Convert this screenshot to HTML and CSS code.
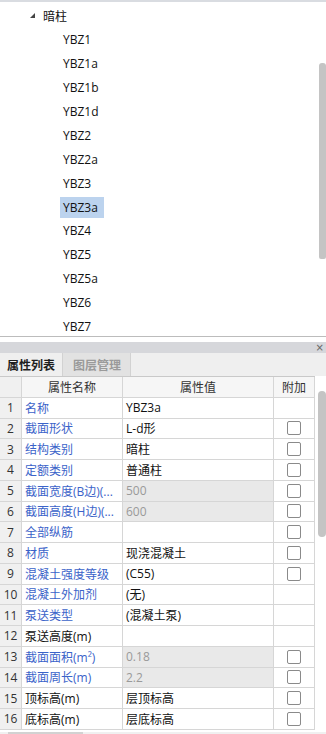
FILE: index.html
```html
<!DOCTYPE html>
<html lang="zh-CN">
<head>
    <meta charset="UTF-8">
    <meta name="viewport" content="width=device-width, initial-scale=1.0">
    <title>属性列表</title>
    <link rel="stylesheet" href="styles.css">
</head>
<body>
    <!-- component tree -->
    <section class="tree">
        <div class="tree-list">
            <div class="node root"><span class="twisty"></span>暗柱</div>
            <div class="node"><span>YBZ1</span></div>
            <div class="node"><span>YBZ1a</span></div>
            <div class="node"><span>YBZ1b</span></div>
            <div class="node"><span>YBZ1d</span></div>
            <div class="node"><span>YBZ2</span></div>
            <div class="node"><span>YBZ2a</span></div>
            <div class="node"><span>YBZ3</span></div>
            <div class="node"><span class="selected">YBZ3a</span></div>
            <div class="node"><span>YBZ4</span></div>
            <div class="node"><span>YBZ5</span></div>
            <div class="node"><span>YBZ5a</span></div>
            <div class="node"><span>YBZ6</span></div>
            <div class="node"><span>YBZ7</span></div>
        </div>
        <div class="vscroll tree-scroll"><div class="thumb"></div></div>
    </section>

    <!-- property panel -->
    <section class="panel">
        <div class="panel-title"><span class="close">×</span></div>
        <div class="tabs">
            <div class="tab active">属性列表</div>
            <div class="tab">图层管理</div>
        </div>
        <div class="grid-wrap">
            <div class="props">
                <div class="c num head"></div>
                <div class="c head">属性名称</div>
                <div class="c head">属性值</div>
                <div class="c head extra-head">附加</div>

                <div class="c num">1</div>
                <div class="c name blue">名称</div>
                <div class="c val">YBZ3a</div>
                <div class="c chk"></div>

                <div class="c num">2</div>
                <div class="c name blue">截面形状</div>
                <div class="c val">L-d形</div>
                <div class="c chk"><i class="box"></i></div>

                <div class="c num">3</div>
                <div class="c name blue">结构类别</div>
                <div class="c val">暗柱</div>
                <div class="c chk"><i class="box"></i></div>

                <div class="c num">4</div>
                <div class="c name blue">定额类别</div>
                <div class="c val">普通柱</div>
                <div class="c chk"><i class="box"></i></div>

                <div class="c num">5</div>
                <div class="c name blue">截面宽度(B边)(...</div>
                <div class="c val ro">500</div>
                <div class="c chk"><i class="box"></i></div>

                <div class="c num">6</div>
                <div class="c name blue">截面高度(H边)(...</div>
                <div class="c val ro">600</div>
                <div class="c chk"><i class="box"></i></div>

                <div class="c num">7</div>
                <div class="c name blue">全部纵筋</div>
                <div class="c val"></div>
                <div class="c chk"><i class="box"></i></div>

                <div class="c num">8</div>
                <div class="c name blue">材质</div>
                <div class="c val">现浇混凝土</div>
                <div class="c chk"><i class="box"></i></div>

                <div class="c num">9</div>
                <div class="c name blue">混凝土强度等级</div>
                <div class="c val">(C55)</div>
                <div class="c chk"><i class="box"></i></div>

                <div class="c num">10</div>
                <div class="c name blue">混凝土外加剂</div>
                <div class="c val">(无)</div>
                <div class="c chk"></div>

                <div class="c num">11</div>
                <div class="c name blue">泵送类型</div>
                <div class="c val">(混凝土泵)</div>
                <div class="c chk"></div>

                <div class="c num">12</div>
                <div class="c name">泵送高度(m)</div>
                <div class="c val"></div>
                <div class="c chk"></div>

                <div class="c num">13</div>
                <div class="c name blue">截面面积(m²)</div>
                <div class="c val ro">0.18</div>
                <div class="c chk"><i class="box"></i></div>

                <div class="c num">14</div>
                <div class="c name blue">截面周长(m)</div>
                <div class="c val ro">2.2</div>
                <div class="c chk"><i class="box"></i></div>

                <div class="c num">15</div>
                <div class="c name">顶标高(m)</div>
                <div class="c val">层顶标高</div>
                <div class="c chk"><i class="box"></i></div>

                <div class="c num">16</div>
                <div class="c name">底标高(m)</div>
                <div class="c val">层底标高</div>
                <div class="c chk"><i class="box"></i></div>
            </div>
            <div class="vscroll grid-scroll"><div class="thumb"></div></div>
        </div>
        <div class="hscroll"><div class="hthumb"></div></div>
    </section>
</body>
</html>
```

FILE: styles.css
```css
body {
    margin: 0;
    width: 326px;
    height: 734px;
    overflow: hidden;
    background-color: #fff;
    font-family: "Open Sans", "Noto Sans CJK SC", sans-serif;
    font-size: 12px;
    color: #111;
}

/* tree */

.tree {
    display: flex;
    height: 337px;
    box-sizing: border-box;
    border-top: 2px solid #d9dce1;
    border-bottom: 1px solid #bcbcbc;
    overflow: hidden;
}

.tree-list {
    flex: 1;
    padding-top: 2px;
}

.node {
    height: 23.9px;
    display: flex;
    align-items: center;
    padding-left: 60px;
    white-space: nowrap;
}

.node span {
    display: inline-block;
    padding: 0 3px;
    line-height: 21px;
}

.node .selected {
    background-color: #bcd3ee;
    padding-right: 6px;
}

.node.root {
    padding-left: 30px;
}

.twisty {
    width: 0;
    height: 0;
    padding: 0 !important;
    border-left: 5px solid transparent;
    border-bottom: 5px solid #444;
    margin-right: 8px;
}

.vscroll {
    width: 7px;
    flex: none;
}

.thumb {
    background-color: #c4c4c4;
    border-radius: 3px 3px 2px 2px;
}

.tree-scroll .thumb {
    margin-top: 61px;
    height: 196px;
}

/* panel */

.panel {
    margin-top: 5px;
}

.panel-title {
    height: 11px;
    background-color: #d6d7db;
    display: flex;
    justify-content: flex-end;
    align-items: center;
}

.close {
    font-family: "DejaVu Sans", sans-serif;
    font-size: 10px;
    line-height: 11px;
    color: #666;
    margin-right: 2px;
}

.tabs {
    height: 23px;
    background-color: #efefef;
    display: flex;
    align-items: stretch;
}

.tab {
    display: flex;
    align-items: center;
    font-weight: bold;
    padding: 0 7px;
    color: #9a9a9a;
    background-color: #e2e2e2;
    border-left: 1px solid #d2d2d2;
    border-right: 1px solid #d2d2d2;
    margin-left: 2px;
    padding: 0 9px 0 10px;
}

.tab.active {
    color: #1e1e1e;
    background-color: #efefef;
    border: none;
    margin-left: 0;
    padding: 0 5px 0 7px;
}

.grid-wrap {
    display: flex;
    height: 354px;
}

.props {
    display: grid;
    grid-template-columns: 22px 101px 151px 41px;
    grid-auto-rows: 20.75px;
    border-top: 1px solid #c9c9c9;
    align-self: flex-start;
}

.c {
    box-sizing: border-box;
    border-right: 1px solid #d6d6d6;
    border-bottom: 1px solid #d6d6d6;
    display: flex;
    align-items: center;
    white-space: nowrap;
    overflow: hidden;
}

.head {
    justify-content: center;
    background-color: #f6f6f6;
    color: #333;
}

.extra-head {
    color: #333;
}

.num {
    justify-content: center;
    background-color: #f0f0f0;
    color: #333;
}

.name {
    padding-left: 3px;
}

.blue {
    color: #3b63c9;
}

.val {
    padding-left: 3px;
}

.val.ro {
    background-color: #e9e9e9;
    color: #9a9a9a;
}

.chk {
    justify-content: center;
}

.box {
    width: 14px;
    height: 14px;
    box-sizing: border-box;
    border: 1px solid #8a8a8a;
    border-radius: 2px;
    background-color: #fff;
}

.grid-scroll {
    margin-left: 3px;
    width: 8px;
}

.grid-scroll .thumb {
    margin-top: 15px;
    height: 146px;
    border-radius: 4px;
}

.hscroll {
    height: 5px;
    background-color: #f0f0f0;
    padding-left: 8px;
}

.hthumb {
    width: 75px;
    height: 3px;
    margin-top: 2px;
    background-color: #d2d2d2;
}
```
